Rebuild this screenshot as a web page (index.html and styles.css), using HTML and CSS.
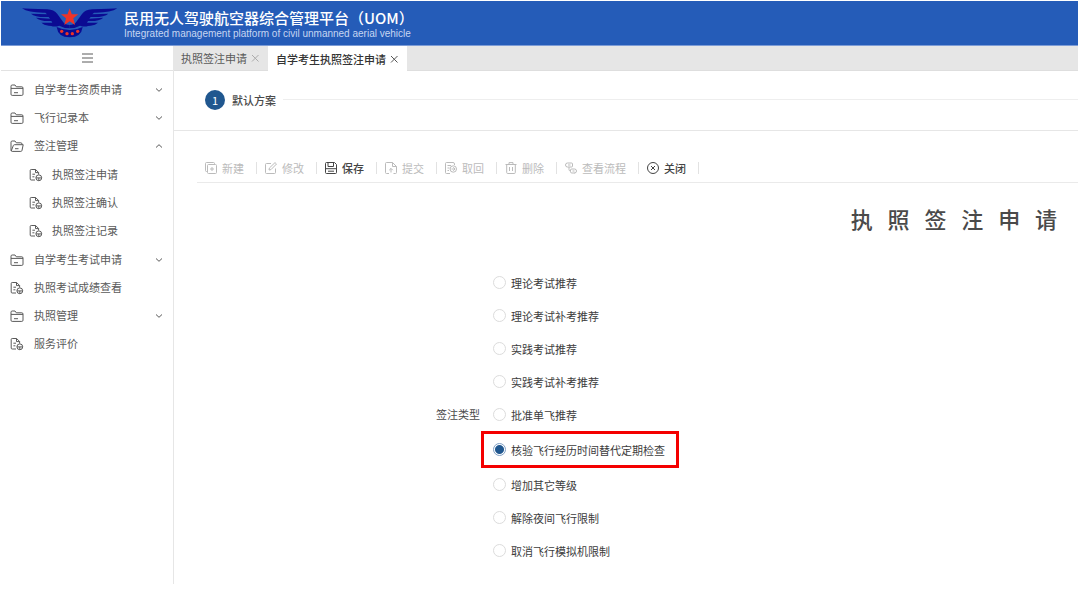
FILE: index.html
```html
<!DOCTYPE html>
<html lang="zh-CN">
<head>
  <meta charset="UTF-8">
  <meta name="viewport" content="width=device-width, initial-scale=1.0">
  <title>民用无人驾驶航空器综合管理平台（UOM）</title>
  <link rel="stylesheet" href="styles.css">
</head>
<body>

<!-- Shared icons -->
<svg class="sprite" aria-hidden="true">
  <symbol id="icon-folder" viewBox="0 0 14 14">
    <path d="M1 11V3.2Q1 2 2.2 2H5L6.3 3.8H11.8Q13 3.8 13 5V11.2Q13 12.4 11.8 12.4H2.2Q1 12.4 1 11.2ZM1 5.4H13M4 9.7H8"/>
  </symbol>
  <symbol id="icon-folder-open" viewBox="0 0 14 14">
    <path d="M1 11V3.2Q1 2 2.2 2H5L6.3 3.8H10.8Q12 3.8 12 5V5.6M1.2 12L3.3 6.6Q3.6 5.7 4.5 5.7H13.2L12 11.4Q11.8 12.4 10.8 12.4H2.2Q1 12.4 1 11M5 9.7H8.5"/>
  </symbol>
  <symbol id="icon-doc" viewBox="0 0 14 14">
    <path d="M6 12H2.2Q1.2 12 1.2 11V2.5Q1.2 1.5 2.2 1.5H6.6L9.6 4.5V6.5M6.5 1.5V4.6H9.6M3.4 6.2H6M3.4 8.8H5.4"/>
    <circle cx="9.8" cy="9.8" r="2.9"/>
    <path d="M7 9.9H12.6M9.8 9.9V12.6"/>
  </symbol>
  <symbol id="icon-down" viewBox="0 0 10 10"><path d="M2 3.5L5 6.3L8 3.5"/></symbol>
  <symbol id="icon-up" viewBox="0 0 10 10"><path d="M2 6.5L5 3.7L8 6.5"/></symbol>
  <symbol id="icon-x" viewBox="0 0 10 10"><path d="M2 2L8.5 8.5M8.5 2L2 8.5"/></symbol>
</svg>

<header class="header">
  <svg class="logo" viewBox="0 0 288 90" aria-hidden="true">
    <g fill="#0b0b92">
      <path id="wing" d="M0 1Q15 3 76 4Q96 5 106 18L124 43Q130 51 143 51V61Q126 61 112 53Q98 58 88 54L80 53Q65 51 58 44L91 44L88 39Q56 41 42 29L84 32L80 27Q40 29 27 17L75 19L70 14Q20 15 0 1Z"/>
      <use href="#wing" transform="translate(286 0) scale(-1 1)"/>
      <path d="M104 57Q122 66 143 66Q164 66 182 57Q178 88 143 88Q108 88 104 57Z"/>
    </g>
    <g fill="#ee3326">
      <path d="M143 1L149.500 19H169L154 31L159 51L143 40L127 51L132 31L117 19H136.500Z"/>
      <circle cx="119" cy="70" r="5"/>
      <circle cx="135" cy="77" r="5"/>
      <circle cx="151" cy="77" r="5"/>
      <circle cx="167" cy="70" r="5"/>
    </g>
  </svg>
  <div class="brand">
    <div class="brand-name">民用无人驾驶航空器综合管理平台（UOM）</div>
    <div class="brand-sub">Integrated management platform of civil unmanned aerial vehicle</div>
  </div>
</header>

<div class="layout">
  <aside class="sidebar">
    <button class="toggle" type="button" aria-label="菜单">
      <svg class="icon" viewBox="0 0 14 14"><path d="M2 3H13M2 7H13M2 11H13"/></svg>
    </button>
    <ul class="menu">
      <li><a href="#"><svg class="icon"><use href="#icon-folder"/></svg><span>自学考生资质申请</span><svg class="arrow"><use href="#icon-down"/></svg></a></li>
      <li><a href="#"><svg class="icon"><use href="#icon-folder"/></svg><span>飞行记录本</span><svg class="arrow"><use href="#icon-down"/></svg></a></li>
      <li>
        <a href="#"><svg class="icon"><use href="#icon-folder-open"/></svg><span>签注管理</span><svg class="arrow"><use href="#icon-up"/></svg></a>
        <ul class="submenu">
          <li><a href="#"><svg class="icon"><use href="#icon-doc"/></svg><span>执照签注申请</span></a></li>
          <li><a href="#"><svg class="icon"><use href="#icon-doc"/></svg><span>执照签注确认</span></a></li>
          <li><a href="#"><svg class="icon"><use href="#icon-doc"/></svg><span>执照签注记录</span></a></li>
        </ul>
      </li>
      <li><a href="#"><svg class="icon"><use href="#icon-folder"/></svg><span>自学考生考试申请</span><svg class="arrow"><use href="#icon-down"/></svg></a></li>
      <li><a href="#"><svg class="icon"><use href="#icon-doc"/></svg><span>执照考试成绩查看</span></a></li>
      <li><a href="#"><svg class="icon"><use href="#icon-folder"/></svg><span>执照管理</span><svg class="arrow"><use href="#icon-down"/></svg></a></li>
      <li><a href="#"><svg class="icon"><use href="#icon-doc"/></svg><span>服务评价</span></a></li>
    </ul>
  </aside>

  <main class="main">
    <nav class="tabs">
      <div class="tab"><a href="#">执照签注申请</a><button type="button" aria-label="关闭标签"><svg><use href="#icon-x"/></svg></button></div>
      <div class="tab active"><a href="#">自学考生执照签注申请</a><button type="button" aria-label="关闭标签"><svg><use href="#icon-x"/></svg></button></div>
    </nav>

    <div class="steps">
      <span class="step-num">1</span>
      <span>默认方案</span>
      <span class="step-line"></span>
    </div>

    <div class="toolbar">
      <button type="button" disabled>
        <svg viewBox="0 0 12 12"><path d="M2.500 9.500H1.500Q.5 9.500 .5 8.500V1.500Q.5 .5 1.500 .5H8.500Q9.500 .5 9.500 1.500V2.500"/><rect x="2.500" y="2.500" width="9" height="9" rx="1"/><path d="M7 5V9M5 7H9"/></svg>新建
      </button>
      <button type="button" disabled>
        <svg viewBox="0 0 12 12"><path d="M6 1.500H1.500Q.5 1.500 .5 2.500V10.500Q.5 11.500 1.500 11.500H9.500Q10.500 11.500 10.500 10.500V6.500M4 8L4.400 6L10 .6L11.500 2L6 7.600Z"/></svg>修改
      </button>
      <button type="button">
        <svg viewBox="0 0 12 12"><path d="M1.500 .5H9.500L11.500 2.500V10.500Q11.500 11.500 10.500 11.500H1.500Q.5 11.500 .5 10.500V1.500Q.5 .5 1.500 .5ZM3 .5V4.500H8.500V.5M.5 6.700H11.500M3 9.200H9"/></svg>保存
      </button>
      <button type="button" disabled>
        <svg viewBox="0 0 12 12"><path d="M4 11.500H1.500Q.5 11.500 .5 10.500V1.500Q.5 .5 1.500 .5H7.500L11.500 4.500V10.500Q11.500 11.500 10.500 11.500H8.500M7.500 .5V4.500H11.500M6 10.500V6.500M4.200 8.200L6 6.400L7.800 8.200"/></svg>提交
      </button>
      <button type="button" disabled>
        <svg viewBox="0 0 12 12"><path d="M5 11.500H1.500Q.5 11.500 .5 10.500V1.500Q.5 .5 1.500 .5H8Q9.500 .5 9.500 2V3M2.500 3.500H6M2.500 6H4.500M2.500 8.500H4"/><circle cx="8.300" cy="7" r="3.200"/><path d="M6.500 7H10M8.300 5.200L10 7L8.300 8.800"/></svg>取回
      </button>
      <button type="button" disabled>
        <svg viewBox="0 0 12 12"><path d="M.5 2.500H11.500M4 2.500V.6H8V2.500M1.700 2.500V10.500Q1.700 11.500 2.700 11.500H9.300Q10.300 11.500 10.300 10.500V2.500M4.500 5V9M7.500 5V9"/></svg>删除
      </button>
      <button type="button" disabled>
        <svg viewBox="0 0 12 12"><path d="M2.500 1H6.500Q7.500 1 7.500 2V4Q7.500 5 6.500 5H2.500Q.5 5 .5 3Q.5 1 2.500 1ZM3 3H5.500M4 5V7.500Q4 9 5.500 9M9.800 11H6.800Q5.500 11 5.500 9.500V8Q5.500 7 6.800 7H9.500Q11.500 7 11.500 9Q11.500 11 9.500 11ZM7.500 9H9.500"/></svg>查看流程
      </button>
      <button type="button">
        <svg viewBox="0 0 12 12"><circle cx="6" cy="6" r="5.500"/><path d="M4 4L8 8M8 4L4 8"/></svg>关闭
      </button>
    </div>

    <form class="form">
      <h1>执&nbsp;&nbsp;&nbsp;照&nbsp;&nbsp;&nbsp;签&nbsp;&nbsp;&nbsp;注&nbsp;&nbsp;&nbsp;申&nbsp;&nbsp;&nbsp;请</h1>
      <div class="form-row" role="radiogroup" aria-labelledby="type-label">
        <span class="form-label" id="type-label">签注类型</span>
        <div class="options">
          <label><input type="radio" name="type">理论考试推荐</label>
          <label><input type="radio" name="type">理论考试补考推荐</label>
          <label><input type="radio" name="type">实践考试推荐</label>
          <label><input type="radio" name="type">实践考试补考推荐</label>
          <label><input type="radio" name="type">批准单飞推荐</label>
          <label class="marked"><input type="radio" name="type" checked>核验飞行经历时间替代定期检查</label>
          <label><input type="radio" name="type">增加其它等级</label>
          <label><input type="radio" name="type">解除夜间飞行限制</label>
          <label><input type="radio" name="type">取消飞行模拟机限制</label>
        </div>
      </div>
    </form>
  </main>
</div>

</body>
</html>
```

FILE: styles.css
```css
* {
  box-sizing: border-box;
}
body {
  display: flex;
  flex-direction: column;
  min-height: 100vh;
  margin: 0;
  padding: 1px 2px 6px 1px;
  background: #fff;
  color: #4a4a4a;
  font-family: "Noto Sans CJK SC", sans-serif;
  font-size: 11px;
  line-height: 16px;
}
a {
  color: inherit;
  text-decoration: none;
}
button {
  margin: 0;
  padding: 0;
  border: none;
  background: none;
  color: inherit;
  font: inherit;
  cursor: pointer;
}
svg {
  flex: none;
  fill: none;
  stroke: currentColor;
}
.sprite {
  display: none;
}

/* Header */
.header {
  display: flex;
  align-items: center;
  height: 45px;
  padding-left: 21px;
  border-bottom: 1px solid #7d9cd6;
  background: #255cb8;
  color: #fff;
}
.logo {
  width: 96px;
  height: 30px;
  margin-right: 6px;
  stroke: none;
}
.brand {
  padding-top: 1px;
}
.brand-name {
  font-size: 15px;
  font-weight: 500;
  line-height: 20px;
}
.brand-sub {
  color: #c5d6f2;
  font-family: "Liberation Sans", Arial, sans-serif;
  font-size: 10px;
  line-height: 12px;
}

.layout {
  display: flex;
  flex: 1;
}

/* Sidebar */
.sidebar {
  width: 173px;
  flex: none;
  border-right: 1px solid #e6e6e6;
  color: #5a5a5a;
}
.toggle {
  display: flex;
  align-items: center;
  justify-content: center;
  width: 100%;
  height: 25px;
  border-bottom: 1px solid #e2e2e2;
}
.icon {
  width: 14px;
  height: 14px;
}
.menu,
.submenu {
  margin: 0;
  padding: 0;
  list-style: none;
}
.menu {
  padding-top: 5px;
}
.menu a {
  display: flex;
  align-items: center;
  height: 28px;
  padding: 0 9px;
}
.menu span {
  flex: 1;
  margin-left: 10px;
  padding-bottom: 2px;
}
.submenu {
  padding: 1px 0;
}
.submenu a {
  padding-left: 28px;
}
.submenu span {
  margin-left: 9px;
}
.arrow {
  width: 10px;
  height: 10px;
}

/* Tabs */
.main {
  flex: 1;
  min-width: 0;
}
.tabs {
  display: flex;
  height: 25px;
  border-bottom: 1px solid #dedede;
  background: #e6e6e6;
}
.tab {
  display: flex;
  align-items: center;
  gap: 3px;
  padding: 0 8px 0 7px;
  color: #5a5a5a;
}
.tab button {
  display: flex;
  color: #aaa;
}
.tab svg {
  width: 10px;
  height: 10px;
}
.tab.active {
  height: 25px;
  padding: 0 8px;
  background: #fff;
  color: #333;
  font-weight: 500;
}
.tab.active button {
  color: #555;
}

/* Steps */
.steps {
  display: flex;
  align-items: center;
  gap: 7px;
  height: 60px;
  padding: 0 0 2px 31px;
  border-bottom: 1px solid #e6e6e6;
  font-weight: 500;
}
.step-num {
  width: 20px;
  height: 20px;
  border-radius: 50%;
  background: #20578f;
  color: #fff;
  font-weight: 400;
  line-height: 20px;
  text-align: center;
}
.step-line {
  flex: 1;
  height: 1px;
  background: #eee;
}

/* Toolbar */
.toolbar {
  display: flex;
  align-items: center;
  height: 29px;
  margin: 23px 0 0 23px;
  border-bottom: 1px solid #eaeaea;
}
.toolbar button {
  display: flex;
  align-items: center;
  gap: 5px;
  height: 12px;
  padding: 0 12px 0 8px;
  border-right: 1px solid #e2e2e2;
  color: #444;
  font-weight: 500;
}
.toolbar button:disabled {
  color: #bbb;
  font-weight: 400;
  cursor: default;
}
.toolbar svg {
  width: 12px;
  height: 12px;
}

/* Form */
.form {
  padding-left: 23px;
}
.form h1 {
  margin: 19px 21px 32px 0;
  font-size: 22px;
  font-weight: 500;
  line-height: 32px;
  text-align: right;
}
.form-row {
  display: flex;
  align-items: center;
}
.form-label {
  width: 284px;
  padding: 0 1px 5px 0;
  text-align: right;
}
.options {
  display: flex;
  flex-direction: column;
  align-items: flex-start;
}
.options label {
  display: flex;
  align-items: center;
  gap: 5px;
  height: 33px;
  padding: 0 11px 0 12px;
  color: #3c3c3c;
}
.options .marked {
  height: 37px;
  padding: 0 11px 0 9px;
  border: 3px solid #f40000;
}
.options input {
  appearance: none;
  width: 13px;
  height: 13px;
  margin: 0;
  border: 1px solid #dcdcdc;
  border-radius: 50%;
}
.options input:checked {
  border-color: #7fa0c6;
  background: radial-gradient(circle, #20578f 4px, #fff 5px);
}
```
